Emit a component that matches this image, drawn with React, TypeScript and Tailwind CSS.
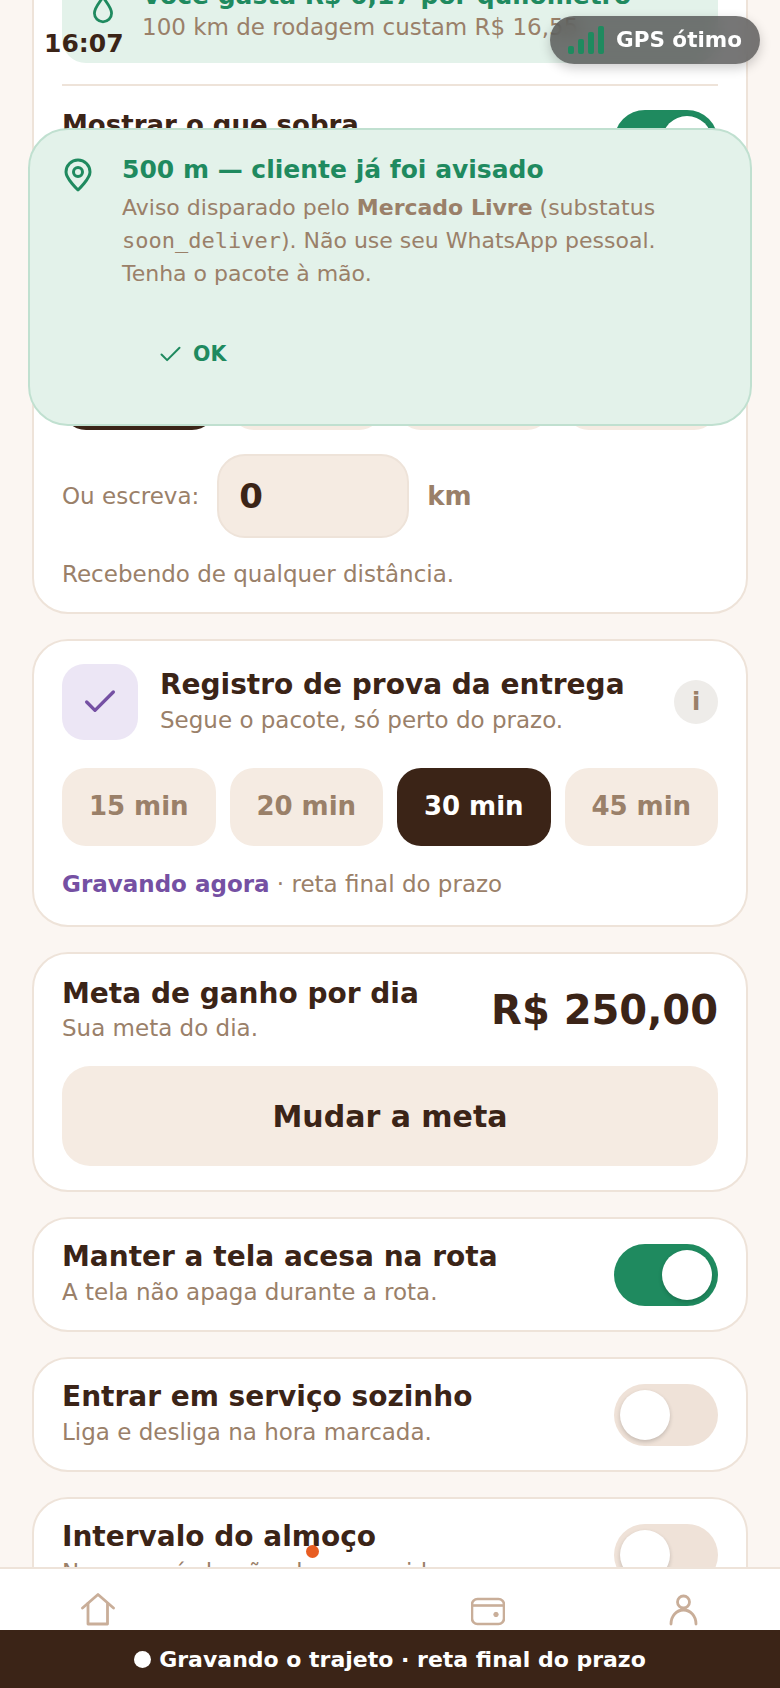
import { Check } from 'lucide-react';

const font = 'font-["DejaVu_Sans",sans-serif]';

function Toggle({ on }: { on?: boolean }) {
  return (
    <div className={`flex h-[62px] w-[104px] shrink-0 items-center rounded-full p-[6px] ${on ? 'justify-end bg-[#1f8a5f]' : 'justify-start bg-[#efe2d8]'}`}>
      <div className="h-[50px] w-[50px] rounded-full bg-white shadow-[0_2px_4px_rgba(0,0,0,0.18)]" />
    </div>
  );
}

function Chip({ label, active }: { label?: string; active?: boolean }) {
  return (
    <div className={`flex h-[78px] flex-1 items-center justify-center rounded-[24px] pb-[2px] text-[26px] font-bold ${active ? 'bg-[#3b2417] text-white' : 'bg-[#f5ebe2] text-[#9a8069]'}`}>
      {label}
    </div>
  );
}

function SwitchCard({ title, sub, on }: { title: string; sub: string; on?: boolean }) {
  return (
    <section className="flex h-[115px] shrink-0 items-center justify-between rounded-[36px] border-2 border-[#eee3d9] bg-white px-[28px]">
      <div className="pb-[1px]">
        <h3 className="text-[28px] leading-[34px] font-bold text-[#3b2417]">{title}</h3>
        <p className="mt-[2px] text-[23px] leading-[32px] text-[#9a8069]">{sub}</p>
      </div>
      <Toggle on={on} />
    </section>
  );
}

function HomeIcon() {
  return (
    <svg width="34" height="34" viewBox="0 0 34 34" fill="none" stroke="currentColor" strokeWidth="2.8" strokeLinejoin="round" strokeLinecap="round">
      <path d="M1.5 15 17 1.5 32.5 15" />
      <path d="M7 10.5V31h19.5V10.5" />
    </svg>
  );
}

function WalletIcon() {
  return (
    <svg width="34" height="34" viewBox="0 0 34 34" fill="none" stroke="currentColor" strokeWidth="2.6">
      <rect x="1" y="6" width="32" height="25" rx="5.5" />
      <path d="M1 12.5h32" />
      <circle cx="25" cy="21.5" r="2.2" fill="currentColor" strokeWidth="1" />
    </svg>
  );
}

function UserIcon() {
  return (
    <svg width="34" height="34" viewBox="0 0 34 34" fill="none" stroke="currentColor" strokeWidth="2.8" strokeLinecap="round">
      <circle cx="17.5" cy="9" r="6" />
      <path d="M5 31c0-8 5.5-14 12.5-14S30 23 30 31" />
    </svg>
  );
}

export default function App() {
  return (
    <div className={`relative flex h-[1688px] w-[780px] flex-col overflow-hidden bg-[#fbf6f2] ${font}`}>
      <main className="flex min-h-0 flex-1 flex-col gap-[25px] overflow-hidden px-[32px]">
        <section className="-mt-[60px] shrink-0 rounded-[36px] border-2 border-[#eee3d9] bg-white px-[28px] pb-[22px]">
          <div className="flex gap-[26px] rounded-b-[24px] bg-[#e3f2ea] pb-[20px] pl-[28px] pt-[39px]">
            <svg className="mt-[14px] h-[30px] w-[26px] shrink-0 text-[#1f8a5f]" viewBox="0 0 24 28" fill="none" stroke="currentColor" strokeWidth="2.6">
              <path d="M12 2c4 6 8 10 8 15a8 8 0 0 1-16 0c0-5 4-9 8-15z" />
            </svg>
            <div>
              <p className="text-[25px] leading-[30px] font-bold text-[#1f8a5f]">Você gasta R$ 0,17 por quilômetro</p>
              <p className="text-[23px] leading-[32px] text-[#9a8069]">100 km de rodagem custam R$ 16,55.</p>
            </div>
          </div>
          <div className="mt-[21px] flex items-start justify-between border-t-2 border-[#eee3d9] pt-[24px]">
            <h3 className="-mt-[3px] text-[26px] leading-[36px] font-bold text-[#3b2417]">Mostrar o que sobra</h3>
            <Toggle on />
          </div>
          <div className="mt-[180px] flex gap-[14px]">
            <Chip active />
            <Chip />
            <Chip />
            <Chip />
          </div>
          <div className="mt-[24px] flex items-center gap-[18px]">
            <span className="text-[23px] text-[#9a8069]">Ou escreva:</span>
            <div className="flex h-[84px] w-[192px] items-center rounded-[28px] border-2 border-[#eee3d9] bg-[#f5ebe2] px-[20px] text-[34px] font-bold text-[#3b2417]">0</div>
            <span className="text-[26px] font-bold text-[#9a8069]">km</span>
          </div>
          <p className="mt-[20px] text-[23px] leading-[32px] text-[#9a8069]">Recebendo de qualquer distância.</p>
        </section>

        <section className="shrink-0 rounded-[36px] border-2 border-[#eee3d9] bg-white px-[28px] pb-[25px] pt-[23px]">
          <div className="flex items-center gap-[22px]">
            <div className="flex h-[76px] w-[76px] shrink-0 items-center justify-center rounded-[22px] bg-[#ece6f5]">
              <Check className="h-[40px] w-[40px] text-[#7550a3]" strokeWidth={2} />
            </div>
            <div className="min-w-0 flex-1">
              <h3 className="text-[28px] leading-[34px] font-bold text-[#3b2417]">Registro de prova da entrega</h3>
              <p className="mt-[2px] text-[23px] leading-[32px] text-[#9a8069]">Segue o pacote, só perto do prazo.</p>
            </div>
            <div className="flex h-[44px] w-[44px] shrink-0 items-center justify-center rounded-full bg-[#eeece9] text-[24px] font-bold text-[#9a8069]">i</div>
          </div>
          <div className="mt-[28px] flex gap-[14px]">
            <Chip label="15 min" />
            <Chip label="20 min" />
            <Chip label="30 min" active />
            <Chip label="45 min" />
          </div>
          <p className="mt-[22px] text-[23px] leading-[32px] text-[#9a8069]">
            <span className="font-bold text-[#7550a3]">Gravando agora</span> · reta final do prazo
          </p>
        </section>

        <section className="shrink-0 rounded-[36px] border-2 border-[#eee3d9] bg-white px-[28px] pb-[24px] pt-[21px]">
          <div className="flex items-center justify-between">
            <div>
              <h3 className="text-[28px] leading-[37px] font-bold text-[#3b2417]">Meta de ganho por dia</h3>
              <p className="text-[23px] leading-[32px] text-[#9a8069]">Sua meta do dia.</p>
            </div>
            <span className="text-[40px] font-bold text-[#3b2417]">R$ 250,00</span>
          </div>
          <div className="mt-[22px] flex h-[100px] items-center justify-center rounded-[28px] bg-[#f5ebe2] text-[30px] font-bold text-[#3b2417]">Mudar a meta</div>
        </section>

        <SwitchCard title="Manter a tela acesa na rota" sub="A tela não apaga durante a rota." on />
        <SwitchCard title="Entrar em serviço sozinho" sub="Liga e desliga na hora marcada." />
        <SwitchCard title="Intervalo do almoço" sub="Nesse período não chega corrida." />
      </main>

      <nav className="grid h-[121px] shrink-0 grid-cols-4 border-t-2 border-[#eee3d9] bg-white pt-[24px] text-[#c9ae99]">
        <div className="flex justify-center"><HomeIcon /></div>
        <div />
        <div className="flex justify-center"><WalletIcon /></div>
        <div className="flex justify-center"><UserIcon /></div>
      </nav>

      <div className="absolute inset-x-0 bottom-0 flex h-[58px] items-center justify-center gap-[8px] bg-[#3b2417] text-[22px] font-bold text-white">
        <span className="h-[17px] w-[17px] rounded-full bg-white" />
        Gravando o trajeto · reta final do prazo
      </div>

      <span className="absolute left-[306px] top-[1545px] h-[13px] w-[13px] rounded-full bg-[#e85d22]" />

      <div className="absolute left-[44px] top-[25px] text-[25px] font-bold text-[#3b2417]">16:07</div>

      <div className="absolute left-[550px] top-[16px] flex h-[48px] w-[210px] items-center gap-[12px] rounded-full bg-[#3c3c3c]/70 pl-[18px] text-[21.5px] font-bold text-white shadow-[0_4px_12px_rgba(0,0,0,0.2)] backdrop-blur-sm">
        <div className="flex h-[28px] items-end gap-[4px]">
          <span className="h-[8px] w-[6px] rounded-[2px] bg-[#1f8a5f]" />
          <span className="h-[15px] w-[6px] rounded-[2px] bg-[#1f8a5f]" />
          <span className="h-[22px] w-[6px] rounded-[2px] bg-[#1f8a5f]" />
          <span className="h-[28px] w-[6px] rounded-[2px] bg-[#1f8a5f]" />
        </div>
        GPS ótimo
      </div>

      <div className="absolute left-[28px] top-[128px] flex h-[298px] w-[724px] gap-[26px] rounded-[40px] border-2 border-[#c0e0d0] bg-[#e3f2ea] pl-[30px] pr-[40px] pt-[24px]">
        <svg className="mt-[3px] h-[36px] w-[36px] shrink-0 text-[#1f8a5f]" viewBox="0 0 24 24" fill="none" stroke="currentColor" strokeWidth="2" strokeLinejoin="round">
          <path d="M12 22s-8-7.5-8-12a8 8 0 0 1 16 0c0 4.5-8 12-8 12z" />
          <circle cx="12" cy="10" r="3" />
        </svg>
        <div>
          <h2 className="text-[25px] leading-[32px] font-bold text-[#1f8a5f]">500 m — cliente já foi avisado</h2>
          <p className="mt-[5px] text-[22px] leading-[33px] text-[#9a8069]">
            Aviso disparado pelo <b>Mercado Livre</b> (substatus{' '}
            <span className='font-["DejaVu_Sans_Mono",monospace]'>soon_deliver</span>). Não use seu WhatsApp pessoal. Tenha o pacote à mão.
          </p>
          <div className="mt-[49px] flex items-center gap-[9px] pl-[35px] text-[20.5px] font-bold text-[#1f8a5f]">
            <Check className="h-[27px] w-[27px]" strokeWidth={1.8} />
            OK
          </div>
        </div>
      </div>
    </div>
  );
}
